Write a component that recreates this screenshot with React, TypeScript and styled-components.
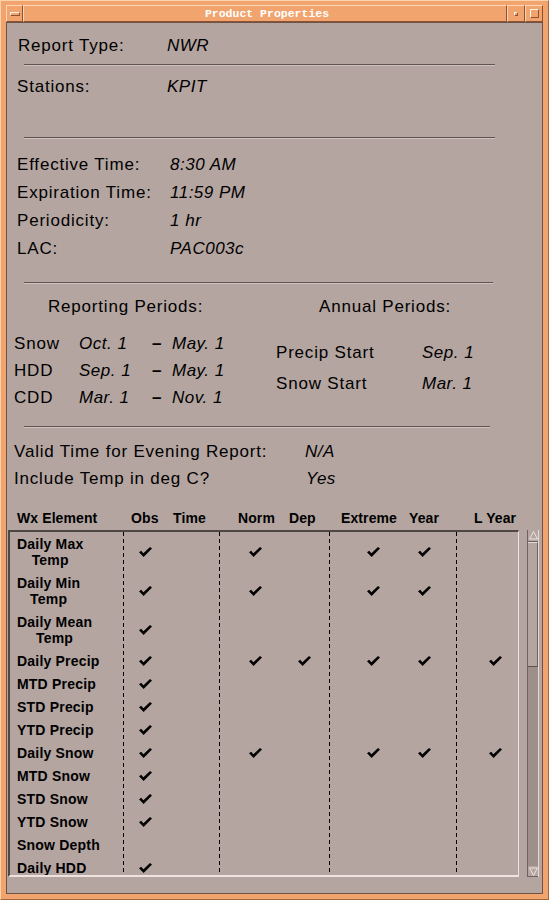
import { Fragment } from "react";
import styled, { createGlobalStyle } from "styled-components";

const ORANGE = "#f2a46e";
const PANEL = "#b4a5a0";

const GlobalStyle = createGlobalStyle`
  html, body {
    margin: 0;
    padding: 0;
    background: ${ORANGE};
  }
  body {
    width: 549px;
    height: 900px;
    overflow: hidden;
    font-family: "Liberation Sans", Arial, sans-serif;
  }
`;

const Window = styled.div`
  width: 549px;
  height: 900px;
  box-sizing: border-box;
  display: flex;
  flex-direction: column;
  background: ${ORANGE};
  border-top: 1px solid #fbd2ae;
  border-left: 1px solid #fbd2ae;
  border-right: 1px solid #a4643c;
  border-bottom: 1px solid #a4643c;
  padding: 4px 5px 5px 5px;
`;

const TitleBar = styled.div`
  display: flex;
  height: 17px;
  flex: none;
`;

const FrameButton = styled.div<{ $w: number }>`
  width: ${p => p.$w}px;
  flex: none;
  box-sizing: border-box;
  display: flex;
  align-items: center;
  justify-content: center;
  border-top: 1px solid #fcd6b4;
  border-left: 1px solid #fcd6b4;
  border-right: 1px solid #8e5232;
  border-bottom: 1px solid #8e5232;
`;

const MenuBar = styled.div`
  width: 8px;
  height: 2px;
  border-top: 1px solid #fff4ea;
  border-left: 1px solid #fff4ea;
  border-right: 1px solid #8e5232;
  border-bottom: 1px solid #8e5232;
`;

const MinDot = styled.div`
  width: 2px;
  height: 2px;
  border-top: 1px solid #fff4ea;
  border-left: 1px solid #fff4ea;
  border-right: 1px solid #8e5232;
  border-bottom: 1px solid #8e5232;
`;

const MaxBox = styled.div`
  width: 7px;
  height: 7px;
  border-top: 1px solid #fff4ea;
  border-left: 1px solid #fff4ea;
  border-right: 1px solid #8e5232;
  border-bottom: 1px solid #8e5232;
`;

const TitleText = styled.div`
  flex: 1;
  box-sizing: border-box;
  display: flex;
  align-items: center;
  justify-content: center;
  border-top: 1px solid #fcd6b4;
  border-left: 1px solid #fcd6b4;
  border-right: 1px solid #8e5232;
  border-bottom: 1px solid #8e5232;
  color: #fff;
  font-family: "Liberation Mono", "Courier New", monospace;
  font-weight: bold;
  font-size: 11.5px;
  padding-left: 4px;
`;

const Body = styled.div`
  flex: 1;
  display: flex;
  flex-direction: column;
  background: ${PANEL};
  border: 1px solid #6e5446;
  padding-top: 13px;
  color: #000;
  font-size: 17px;
  letter-spacing: 0.8px;
  overflow: hidden;
`;

const FieldRow = styled.div<{ $h: number; $indent: number; $mt?: number }>`
  display: flex;
  align-items: center;
  height: ${p => p.$h}px;
  padding-left: ${p => p.$indent}px;
  margin-top: ${p => p.$mt ?? 0}px;
  flex: none;
`;

const FieldLabel = styled.span<{ $w: number }>`
  width: ${p => p.$w}px;
  flex: none;
  white-space: nowrap;
`;

const FieldValue = styled.span`
  font-style: italic;
  white-space: nowrap;
  letter-spacing: 0.5px;
`;

const Rule = styled.div<{ $mt: number; $w: number }>`
  flex: none;
  margin-top: ${p => p.$mt}px;
  margin-left: 17px;
  width: ${p => p.$w}px;
  height: 0;
  border-top: 1px solid #5e5552;
  border-bottom: 1px solid #cfc1bc;
`;

const PeriodsHead = styled.div`
  display: flex;
  align-items: center;
  height: 20px;
  margin-top: 13px;
  padding-left: 41px;
  flex: none;
`;

const HeadTitle = styled.span<{ $w?: number }>`
  width: ${p => (p.$w ? `${p.$w}px` : "auto")};
  flex: none;
  white-space: nowrap;
`;

const PeriodsBody = styled.div`
  display: flex;
  align-items: flex-start;
  margin-top: 13px;
  padding-left: 7px;
  flex: none;
`;

const RangeGrid = styled.div`
  width: 262px;
  display: grid;
  grid-template-columns: 65px 73px 20px auto;
  grid-auto-rows: 27px;
  align-items: center;
  white-space: nowrap;
`;

const AnnualGrid = styled.div`
  margin-top: 7px;
  display: grid;
  grid-template-columns: 146px auto;
  grid-auto-rows: 31px;
  align-items: center;
  white-space: nowrap;
`;

const Italic = styled.span`
  font-style: italic;
  letter-spacing: 0.5px;
`;

const Dash = styled.span`
  font-weight: bold;
`;

const HeaderRow = styled.div`
  display: flex;
  align-items: center;
  height: 20px;
  margin-top: 16px;
  padding-left: 10px;
  font-size: 14px;
  font-weight: bold;
  letter-spacing: 0.1px;
  flex: none;
`;

const HeadCell = styled.span<{ $w?: number }>`
  width: ${p => (p.$w ? `${p.$w}px` : "auto")};
  flex: none;
  white-space: nowrap;
`;

const ListArea = styled.div`
  display: flex;
  margin-top: 2px;
  padding-left: 1px;
  height: 347px;
  flex: none;
`;

const ListBox = styled.div`
  width: 511px;
  box-sizing: border-box;
  height: 100%;
  border-top: 2px solid #4f4744;
  border-left: 2px solid #4f4744;
  border-right: 1px solid #efe3df;
  border-bottom: 2px solid #efe3df;
  overflow: hidden;
`;

const ListGrid = styled.div`
  display: grid;
  grid-template-columns: 113px 1px 95px 1px 109px 1px 126px 1px 1fr;
  font-size: 14px;
  font-weight: bold;
  letter-spacing: 0.2px;
`;

const Divider = styled.div<{ $col: number; $span: number }>`
  grid-column: ${p => p.$col};
  grid-row: 1 / span ${p => p.$span};
  background: repeating-linear-gradient(to bottom, #000 0 4px, transparent 4px 7px);
`;

const ElemCell = styled.div<{ $h: number }>`
  height: ${p => p.$h}px;
  display: flex;
  align-items: center;
  padding-left: 7px;
  line-height: 16px;
`;

const ElemLabel = styled.span`
  display: inline-block;
  text-align: center;
  white-space: nowrap;
`;

const CheckGroup = styled.div<{ $h: number; $pad: number }>`
  height: ${p => p.$h}px;
  display: flex;
  align-items: center;
  padding-left: ${p => p.$pad}px;
`;

const Slot = styled.div<{ $w: number }>`
  width: ${p => p.$w}px;
  flex: none;
  display: flex;
  align-items: center;
`;

const Scrollbar = styled.div`
  margin-left: 8px;
  width: 12px;
  height: 100%;
  box-sizing: border-box;
  display: flex;
  flex-direction: column;
  background: #9e8f8a;
  border-left: 1px solid #6e625e;
  border-right: 1px solid #e6dad6;
`;

const ScrollArrow = styled.div<{ $h: number }>`
  height: ${p => p.$h}px;
  flex: none;
  box-sizing: border-box;
  display: flex;
  align-items: center;
  justify-content: center;
  background: ${PANEL};
  border-bottom: 1px solid #6e625e;
`;

const Thumb = styled.div`
  height: 125px;
  flex: none;
  box-sizing: border-box;
  background: ${PANEL};
  border-top: 1px solid #e6dad6;
  border-right: 1px solid #6e625e;
  border-bottom: 1px solid #5e5250;
`;

const Trough = styled.div`
  flex: 1;
`;

const Check = () => (
  <svg width="13" height="10" viewBox="0 0 13 10">
    <path d="M0 5.2 L2.2 3.8 L4.4 6.3 L11 0 L13 1.4 L4.6 10 Z" fill="#000" />
  </svg>
);

const Arrow = ({ down }: { down?: boolean }) => (
  <svg width="9" height="9" viewBox="0 0 9 9">
    <path
      d={down ? "M0.5 1 L8.5 1 L4.5 8.5 Z" : "M4.5 0.5 L8.5 8 L0.5 8 Z"}
      fill="none"
      stroke="#eee2de"
      strokeWidth="1"
    />
  </svg>
);

type Key = "obs" | "time" | "norm" | "dep" | "extreme" | "year" | "lyear";

interface Row {
  label: string[];
  checks: Key[];
}

const rows: Row[] = [
  { label: ["Daily Max", "Temp"], checks: ["obs", "norm", "extreme", "year"] },
  { label: ["Daily Min", "Temp"], checks: ["obs", "norm", "extreme", "year"] },
  { label: ["Daily Mean", "Temp"], checks: ["obs"] },
  { label: ["Daily Precip"], checks: ["obs", "norm", "dep", "extreme", "year", "lyear"] },
  { label: ["MTD Precip"], checks: ["obs"] },
  { label: ["STD Precip"], checks: ["obs"] },
  { label: ["YTD Precip"], checks: ["obs"] },
  { label: ["Daily Snow"], checks: ["obs", "norm", "extreme", "year", "lyear"] },
  { label: ["MTD Snow"], checks: ["obs"] },
  { label: ["STD Snow"], checks: ["obs"] },
  { label: ["YTD Snow"], checks: ["obs"] },
  { label: ["Snow Depth"], checks: [] },
  { label: ["Daily HDD"], checks: ["obs"] },
];

const groups: { pad: number; slots: { key: Key; w: number }[] }[] = [
  { pad: 15, slots: [{ key: "obs", w: 42 }, { key: "time", w: 30 }] },
  { pad: 29, slots: [{ key: "norm", w: 49 }, { key: "dep", w: 20 }] },
  { pad: 37, slots: [{ key: "extreme", w: 51 }, { key: "year", w: 20 }] },
  { pad: 32, slots: [{ key: "lyear", w: 20 }] },
];

const headers: { text: string; w?: number }[] = [
  { text: "Wx Element", w: 114 },
  { text: "Obs", w: 42 },
  { text: "Time", w: 65 },
  { text: "Norm", w: 51 },
  { text: "Dep", w: 52 },
  { text: "Extreme", w: 68 },
  { text: "Year", w: 65 },
  { text: "L Year" },
];

const timeFields = [
  ["Effective Time:", "8:30 AM"],
  ["Expiration Time:", "11:59 PM"],
  ["Periodicity:", "1 hr"],
  ["LAC:", "PAC003c"],
];

const ranges = [
  ["Snow", "Oct. 1", "May. 1"],
  ["HDD", "Sep. 1", "May. 1"],
  ["CDD", "Mar. 1", "Nov. 1"],
];

export default function App() {
  return (
    <>
      <GlobalStyle />
      <Window>
        <TitleBar>
          <FrameButton $w={17}>
            <MenuBar />
          </FrameButton>
          <TitleText>Product Properties</TitleText>
          <FrameButton $w={18}>
            <MinDot />
          </FrameButton>
          <FrameButton $w={18}>
            <MaxBox />
          </FrameButton>
        </TitleBar>
        <Body>
          <FieldRow $h={20} $indent={11}>
            <FieldLabel $w={149}>Report Type:</FieldLabel>
            <FieldValue>NWR</FieldValue>
          </FieldRow>
          <Rule $mt={8} $w={471} />
          <FieldRow $h={20} $indent={10} $mt={11}>
            <FieldLabel $w={150}>Stations:</FieldLabel>
            <FieldValue>KPIT</FieldValue>
          </FieldRow>
          <Rule $mt={40} $w={471} />
          {timeFields.map(([label, value], i) => (
            <FieldRow key={label} $h={28} $indent={10} $mt={i === 0 ? 12 : 0}>
              <FieldLabel $w={153}>{label}</FieldLabel>
              <FieldValue>{value}</FieldValue>
            </FieldRow>
          ))}
          <Rule $mt={19} $w={469} />
          <PeriodsHead>
            <HeadTitle $w={271}>Reporting Periods:</HeadTitle>
            <HeadTitle>Annual Periods:</HeadTitle>
          </PeriodsHead>
          <PeriodsBody>
            <RangeGrid>
              {ranges.map(([name, from, to]) => (
                <Fragment key={name}>
                  <span>{name}</span>
                  <Italic>{from}</Italic>
                  <Dash>–</Dash>
                  <Italic>{to}</Italic>
                </Fragment>
              ))}
            </RangeGrid>
            <AnnualGrid>
              <span>Precip Start</span>
              <Italic>Sep. 1</Italic>
              <span>Snow Start</span>
              <Italic>Mar. 1</Italic>
            </AnnualGrid>
          </PeriodsBody>
          <Rule $mt={15} $w={466} />
          <FieldRow $h={27} $indent={7} $mt={10}>
            <FieldLabel $w={291}>Valid Time for Evening Report:</FieldLabel>
            <FieldValue>N/A</FieldValue>
          </FieldRow>
          <FieldRow $h={27} $indent={7}>
            <FieldLabel $w={292}>Include Temp in deg C?</FieldLabel>
            <FieldValue>Yes</FieldValue>
          </FieldRow>
          <HeaderRow>
            {headers.map(h => (
              <HeadCell key={h.text} $w={h.w}>
                {h.text}
              </HeadCell>
            ))}
          </HeaderRow>
          <ListArea>
            <ListBox>
              <ListGrid>
                {[2, 4, 6, 8].map(c => (
                  <Divider key={c} $col={c} $span={rows.length} />
                ))}
                {rows.map(row => {
                  const h = row.label.length > 1 ? 39 : 23;
                  const id = row.label.join(" ");
                  return (
                    <Fragment key={id}>
                      <ElemCell $h={h}>
                        <ElemLabel>
                          {row.label.map((l, i) => (
                            <div key={i}>{l}</div>
                          ))}
                        </ElemLabel>
                      </ElemCell>
                      {groups.map((g, gi) => (
                        <CheckGroup key={gi} $h={h} $pad={g.pad}>
                          {g.slots.map(s => (
                            <Slot key={s.key} $w={s.w}>
                              {row.checks.includes(s.key) && <Check />}
                            </Slot>
                          ))}
                        </CheckGroup>
                      ))}
                    </Fragment>
                  );
                })}
              </ListGrid>
            </ListBox>
            <Scrollbar>
              <ScrollArrow $h={12}>
                <Arrow />
              </ScrollArrow>
              <Thumb />
              <Trough />
              <ScrollArrow $h={11}>
                <Arrow down />
              </ScrollArrow>
            </Scrollbar>
          </ListArea>
        </Body>
      </Window>
    </>
  );
}
